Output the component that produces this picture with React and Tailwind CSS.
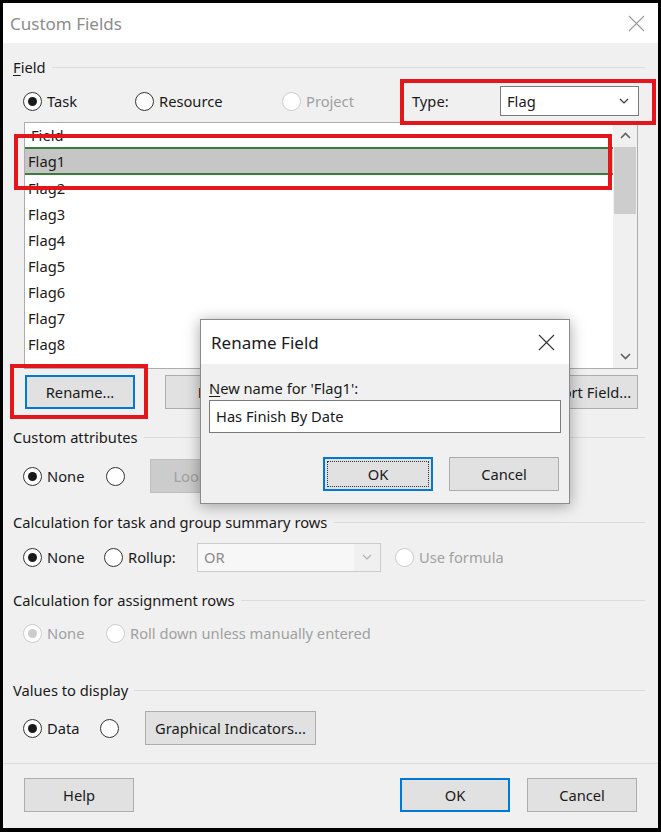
import React from 'react';

const Radio = ({ checked, disabled }) => (
  <span
    className={`w-[19px] h-[19px] shrink-0 rounded-full border flex items-center justify-center bg-white ${
      disabled ? 'border-[#cccccc]' : 'border-[#333333]'
    }`}
  >
    {checked && (
      <span className={`w-[9px] h-[9px] rounded-full ${disabled ? 'bg-[#cccccc]' : 'bg-[#1a1a1a]'}`} />
    )}
  </span>
);

const RadioItem = ({ label, checked, disabled, className = '' }) => (
  <div className={`flex items-center gap-[5px] ${className}`}>
    <Radio checked={checked} disabled={disabled} />
    {label && <span className={disabled ? 'text-[#a0a0a0]' : 'text-[#1a1a1a]'}>{label}</span>}
  </div>
);

const GroupHeader = ({ children, className = '' }) => (
  <div className={`h-[20px] flex items-center pr-[13px] ${className}`}>
    <span className="text-[#1a1a1a] whitespace-nowrap">{children}</span>
    <div className="flex-1 h-px bg-[#dcdcdc] ml-[6px]" />
  </div>
);

const Button = ({ children, focused, disabled, className = '' }) => (
  <div
    className={`h-[34px] shrink-0 flex items-center justify-center whitespace-nowrap ${
      focused
        ? 'border-2 border-[#0078d7] bg-[#e1e1e1] text-[#1a1a1a]'
        : disabled
        ? 'border border-[#bfbfbf] bg-[#cccccc] text-[#a0a0a0]'
        : 'border border-[#adadad] bg-[#e1e1e1] text-[#1a1a1a]'
    } ${className}`}
  >
    {children}
  </div>
);

const Chevron = ({ color = '#333333' }) => (
  <svg width="10" height="6" viewBox="0 0 10 6" fill="none">
    <path d="M1 1 L5 5 L9 1" stroke={color} strokeWidth="1.1" />
  </svg>
);

const CloseX = ({ color, size = 17 }) => (
  <svg width={size} height={size} viewBox="0 0 17 17" fill="none">
    <path d="M1 1 L16 16 M16 1 L1 16" stroke={color} strokeWidth="1.1" />
  </svg>
);

const flags = ['Flag2', 'Flag3', 'Flag4', 'Flag5', 'Flag6', 'Flag7', 'Flag8', 'Flag9'];

export default function App() {
  return (
    <div className="w-[661px] h-[832px] bg-black pt-[3px] pl-[3px] font-['Noto_Sans','Open_Sans',sans-serif] text-[14.7px] leading-none">
      <div className="relative w-[655px] h-[825px] bg-[#f0f0f0] flex flex-col overflow-hidden">
        {/* title bar */}
        <div className="h-[40px] bg-white flex items-center justify-between pl-[7px] pr-[13px] shrink-0">
          <span className="text-[17px] text-[#8c8c8c]">Custom Fields</span>
          <CloseX color="#9a9a9a" />
        </div>

        <div className="pl-[10px] flex flex-col">
          <GroupHeader className="mt-[14px]">
            <span className="underline underline-offset-2">F</span>ield
          </GroupHeader>

          <div className="mt-[9px] h-[30px] flex items-center ml-[10px]">
            <RadioItem label="Task" checked className="w-[112px]" />
            <RadioItem label="Resource" className="w-[147px]" />
            <RadioItem label="Project" disabled className="w-[130px]" />
            <span className="w-[88px] text-[#1a1a1a]">Type:</span>
            <div className="w-[139px] h-[30px] bg-white border border-[#7a7a7a] flex items-center justify-between pl-[6px] pr-[9px]">
              <span className="text-[#1a1a1a]">Flag</span>
              <Chevron />
            </div>
          </div>

          {/* list box */}
          <div className="mt-[6px] ml-[11px] w-[614px] h-[247px] bg-white border border-[#abadb3] flex overflow-hidden">
            <div className="flex-1 flex flex-col">
              <div className="h-[24px] shrink-0 flex items-center pl-[6px] text-[#1a1a1a]">Field</div>
              <div className="h-[28px] shrink-0 bg-[#c6c6c6] border-y-2 border-[#3a7d3a] flex items-center pl-[3px] text-[#1a1a1a]">
                Flag1
              </div>
              {flags.map((f) => (
                <div key={f} className="h-[26px] shrink-0 flex items-center pl-[3px] text-[#1a1a1a]">
                  {f}
                </div>
              ))}
            </div>
            <div className="w-[24px] bg-[#f0f0f0] flex flex-col items-center shrink-0">
              <div className="h-[24px] flex items-center justify-center">
                <svg width="11" height="7" viewBox="0 0 11 7" fill="none">
                  <path d="M1 6 L5.5 1.5 L10 6" stroke="#606060" strokeWidth="1.6" />
                </svg>
              </div>
              <div className="w-[22px] h-[67px] bg-[#cdcdcd]" />
              <div className="flex-1" />
              <div className="h-[24px] flex items-center justify-center">
                <svg width="11" height="7" viewBox="0 0 11 7" fill="none">
                  <path d="M1 1 L5.5 5.5 L10 1" stroke="#606060" strokeWidth="1.6" />
                </svg>
              </div>
            </div>
          </div>

          <div className="mt-[6px] ml-[12px] flex gap-[30px]">
            <Button focused className="w-[110px]">Rename...</Button>
            <Button className="w-[110px]">Delete</Button>
            <Button className="w-[193px]">Add Field to Enterprise...</Button>
            <Button className="w-[110px]">Import Field...</Button>
          </div>

          <GroupHeader className="mt-[18px]">Custom attributes</GroupHeader>
          <div className="mt-[12px] h-[34px] flex items-center ml-[10px]">
            <RadioItem label="None" checked className="w-[83px]" />
            <RadioItem className="w-[44px]" />
            <Button disabled className="w-[110px]">Lookup...</Button>
            <Button disabled className="w-[110px] ml-[16px]">Formula...</Button>
          </div>

          <GroupHeader className="mt-[19px]">Calculation for task and group summary rows</GroupHeader>
          <div className="mt-[10px] h-[30px] flex items-center ml-[10px]">
            <RadioItem label="None" checked className="w-[81px]" />
            <RadioItem label="Rollup:" className="w-[93px]" />
            <div className="w-[184px] h-[29px] border border-[#cccccc] bg-[#f0f0f0] flex items-center">
              <div className="w-[156px] h-full bg-[#f7f7f7] flex items-center pl-[6px] text-[#8a8a8a]">OR</div>
              <div className="flex-1 flex items-center justify-center">
                <Chevron color="#b0b0b0" />
              </div>
            </div>
            <RadioItem label="Use formula" disabled className="ml-[14px]" />
          </div>

          <GroupHeader className="mt-[18px]">Calculation for assignment rows</GroupHeader>
          <div className="mt-[8px] h-[30px] flex items-center ml-[10px]">
            <RadioItem label="None" checked disabled className="w-[83px]" />
            <RadioItem label="Roll down unless manually entered" disabled />
          </div>

          <GroupHeader className="mt-[32px]">Values to display</GroupHeader>
          <div className="mt-[11px] h-[34px] flex items-center ml-[10px]">
            <RadioItem label="Data" checked className="w-[77px]" />
            <RadioItem className="w-[45px]" />
            <Button className="w-[171px]">Graphical Indicators...</Button>
          </div>
        </div>

        <div className="mt-[18px] h-px bg-[#dcdcdc]" />

        <div className="mt-[14px] flex pl-[21px] pr-[21px] gap-[17px]">
          <Button className="w-[110px]">Help</Button>
          <Button focused className="w-[110px] ml-auto">OK</Button>
          <Button className="w-[110px]">Cancel</Button>
        </div>

        {/* annotation boxes */}
        <div className="absolute left-[397px] top-[76px] w-[256px] h-[46px] border-4 border-[#e3161b]" />
        <div className="absolute left-[11px] top-[131px] w-[598px] h-[56px] border-4 border-[#e3161b]" />
        <div className="absolute left-[7px] top-[361px] w-[138px] h-[55px] border-4 border-[#e3161b]" />

        {/* rename dialog */}
        <div className="absolute left-[197px] top-[316px] w-[370px] h-[185px] bg-[#f0f0f0] border border-[#8a8a8a] shadow-[0_2px_14px_rgba(0,0,0,0.35)] flex flex-col">
          <div className="h-[44px] bg-white flex items-center justify-between pl-[10px] pr-[14px] shrink-0">
            <span className="text-[17px] text-[#1a1a1a]">Rename Field</span>
            <CloseX color="#333333" />
          </div>
          <div className="flex flex-col px-[8px]">
            <div className="mt-[15px] h-[18px] flex items-center text-[#1a1a1a]">
              <span className="underline underline-offset-2">N</span>ew name for 'Flag1':
            </div>
            <div className="mt-[3px] w-[352px] h-[33px] bg-white border border-[#7a7a7a] flex items-center pl-[6px] text-[#1a1a1a]">
              Has Finish By Date
            </div>
            <div className="mt-[24px] flex justify-end gap-[16px] pr-[2px]">
              <Button focused className="w-[110px]">
                <div className="w-[102px] h-[26px] border border-dotted border-[#333333] flex items-center justify-center">OK</div>
              </Button>
              <Button className="w-[110px]">Cancel</Button>
            </div>
          </div>
        </div>
      </div>
    </div>
  );
}
